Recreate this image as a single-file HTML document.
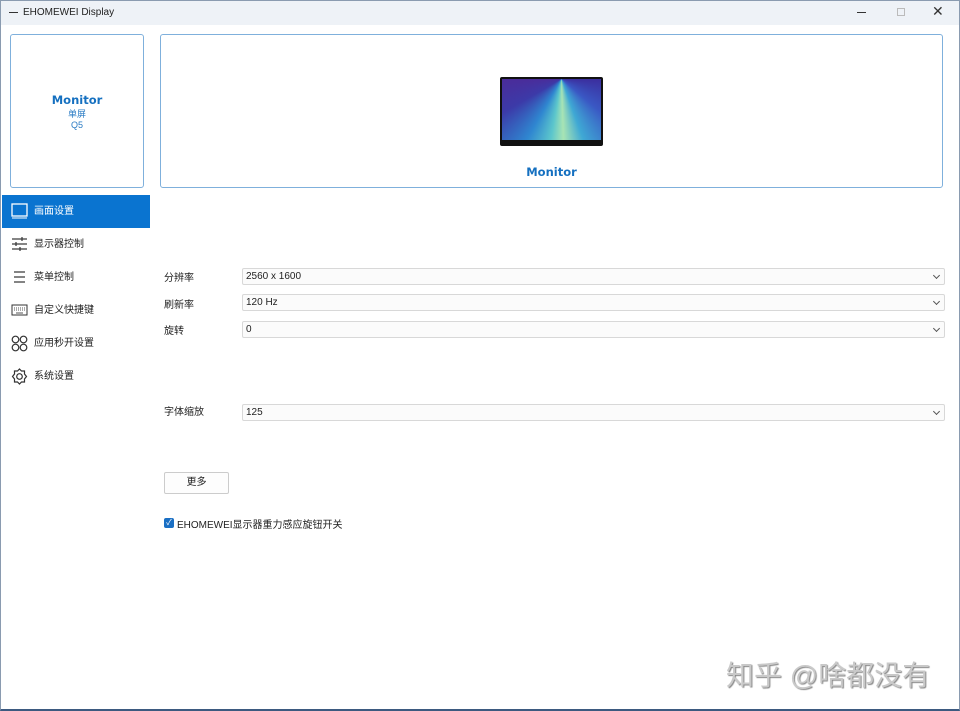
<!DOCTYPE html>
<html><head><meta charset="utf-8"><style>
*{margin:0;padding:0;box-sizing:border-box}
body{width:960px;height:711px;overflow:hidden;background:#fff;font-family:"Liberation Sans","Noto Sans CJK SC",sans-serif;font-size:10px;color:#222;position:relative}
.win{position:absolute;inset:0;border:1px solid #8a9bb0;border-bottom:2px solid #3d5a80}
.title{position:absolute;left:0;top:0;width:960px;height:25px;background:#eef2f7}
.a{position:absolute}
.box{position:absolute;border:1px solid #7fb0dc;border-radius:3px;background:#fff}
.mon{position:absolute;left:0;right:0;text-align:center;color:#1570c0;font-weight:bold;font-family:"DejaVu Sans",sans-serif;font-size:11.5px}
.nav{position:absolute;left:2px;width:148px;height:33px;font-size:10px;line-height:33px;padding-left:32px}
.nav svg{position:absolute;left:9px;top:8px}
.lbl{position:absolute;left:164px;font-size:10px}
.dd{position:absolute;left:242px;width:703px;height:17px;border:1px solid #d8d8d8;border-radius:2px;background:#fbfbfb;font-size:10px;line-height:15px;padding-left:3px}
.dd:after{content:"";position:absolute;right:5px;top:4px;width:4px;height:4px;border-right:1px solid #555;border-bottom:1px solid #555;transform:rotate(45deg)}
</style></head><body>
<div class="title"></div>
<div class="a" style="left:9px;top:12px;width:9px;height:1px;background:#333"></div>
<div class="a" style="left:23px;top:7px;font-size:10px">EHOMEWEI Display</div>
<div class="a" style="left:857px;top:12px;width:9px;height:1px;background:#333"></div>
<div class="a" style="left:897px;top:8px;width:8px;height:8px;border:1px solid #bbb"></div>
<div class="a" style="left:932px;top:3px;font-size:14px;color:#333">✕</div>

<div class="box" style="left:10px;top:34px;width:134px;height:154px">
<div class="mon" style="top:58px">Monitor</div>
<div class="a" style="left:0;right:0;top:72px;text-align:center;color:#2a7bc4;font-size:9px">单屏</div>
<div class="a" style="left:0;right:0;top:85px;text-align:center;color:#2a7bc4;font-size:9px">Q5</div>
</div>
<div class="box" style="left:160px;top:34px;width:783px;height:154px">
<div class="a" style="left:339px;top:42px;width:103px;height:69px;background:#111;border-radius:2px;padding:2px 2px 6px">
<div style="width:100%;height:100%;background:conic-gradient(from 90deg at 60% 0%,#3b2e9e 0deg,#3a58c4 40deg,#3fa8d4 70deg,#a8e4b4 88deg,#5cc6cc 100deg,#2f86d0 120deg,#3c3aa8 150deg,#4a2c9a 180deg)"></div></div>
<div class="mon" style="top:130px">Monitor</div>
</div>

<div class="nav" style="top:195px;background:#0a74d0;color:#fff"><svg width="17" height="16"><rect x="1" y="1" width="15" height="12" fill="none" stroke="#fff" stroke-width="1.3"/><line x1="1" y1="15" x2="16" y2="15" stroke="#fff"/></svg>画面设置</div>
<div class="nav" style="top:228px"><svg width="17" height="16"><g stroke="#333" stroke-width="1.2"><line x1="1" y1="3" x2="16" y2="3"/><line x1="1" y1="8" x2="16" y2="8"/><line x1="1" y1="13" x2="16" y2="13"/><line x1="11" y1="1" x2="11" y2="5"/><line x1="5" y1="6" x2="5" y2="10"/><line x1="9" y1="11" x2="9" y2="15"/></g></svg>显示器控制</div>
<div class="nav" style="top:261px"><svg width="17" height="16"><g stroke="#333" stroke-width="1.2"><line x1="3" y1="3" x2="14" y2="3"/><line x1="3" y1="8" x2="14" y2="8"/><line x1="3" y1="13" x2="14" y2="13"/></g></svg>菜单控制</div>
<div class="nav" style="top:294px"><svg width="17" height="16"><rect x="1" y="3" width="15" height="10" fill="none" stroke="#333"/><g stroke="#555"><line x1="3" y1="6" x2="14" y2="6" stroke-dasharray="1 1"/><line x1="3" y1="8" x2="14" y2="8" stroke-dasharray="1 1"/><line x1="5" y1="11" x2="12" y2="11"/></g></svg>自定义快捷键</div>
<div class="nav" style="top:327px"><svg width="17" height="17"><g fill="none" stroke="#333" stroke-width="1.2"><circle cx="4.5" cy="4.5" r="3.3"/><circle cx="12.5" cy="4.5" r="3.3"/><circle cx="4.5" cy="12.5" r="3.3"/><circle cx="12.5" cy="12.5" r="3.3"/></g></svg>应用秒开设置</div>
<div class="nav" style="top:360px"><svg width="17" height="17"><g fill="none" stroke="#333" stroke-width="1.2"><path d="M8.5 1l2 2 3 0 0 3 2 2.5-2 2.5 0 3-3 0-2 2-2-2-3 0 0-3-2-2.5 2-2.5 0-3 3 0z"/><circle cx="8.5" cy="8.5" r="2.8"/></g></svg>系统设置</div>

<div class="lbl" style="top:269px">分辨率</div><div class="dd" style="top:268px">2560 x 1600</div>
<div class="lbl" style="top:296px">刷新率</div><div class="dd" style="top:294px">120 Hz</div>
<div class="lbl" style="top:322px">旋转</div><div class="dd" style="top:321px">0</div>
<div class="lbl" style="top:403px">字体缩放</div><div class="dd" style="top:404px">125</div>
<div class="a" style="left:164px;top:472px;width:65px;height:22px;border:1px solid #ccc;border-radius:2px;background:#fdfdfd;text-align:center;line-height:20px">更多</div>
<div class="a" style="left:164px;top:518px;width:10px;height:10px;background:#1a6fc4;border-radius:2px;color:#fff;font-size:8px;line-height:10px;text-align:center">✓</div>
<div class="a" style="left:177px;top:516px">EHOMEWEI显示器重力感应旋钮开关</div>
<div class="a" style="left:726px;top:654px;font-size:28px;color:#c9c9c9;text-shadow:1px 1px 1px #888;white-space:nowrap">知乎 @啥都没有</div>
<div class="win"></div>
</body></html>
